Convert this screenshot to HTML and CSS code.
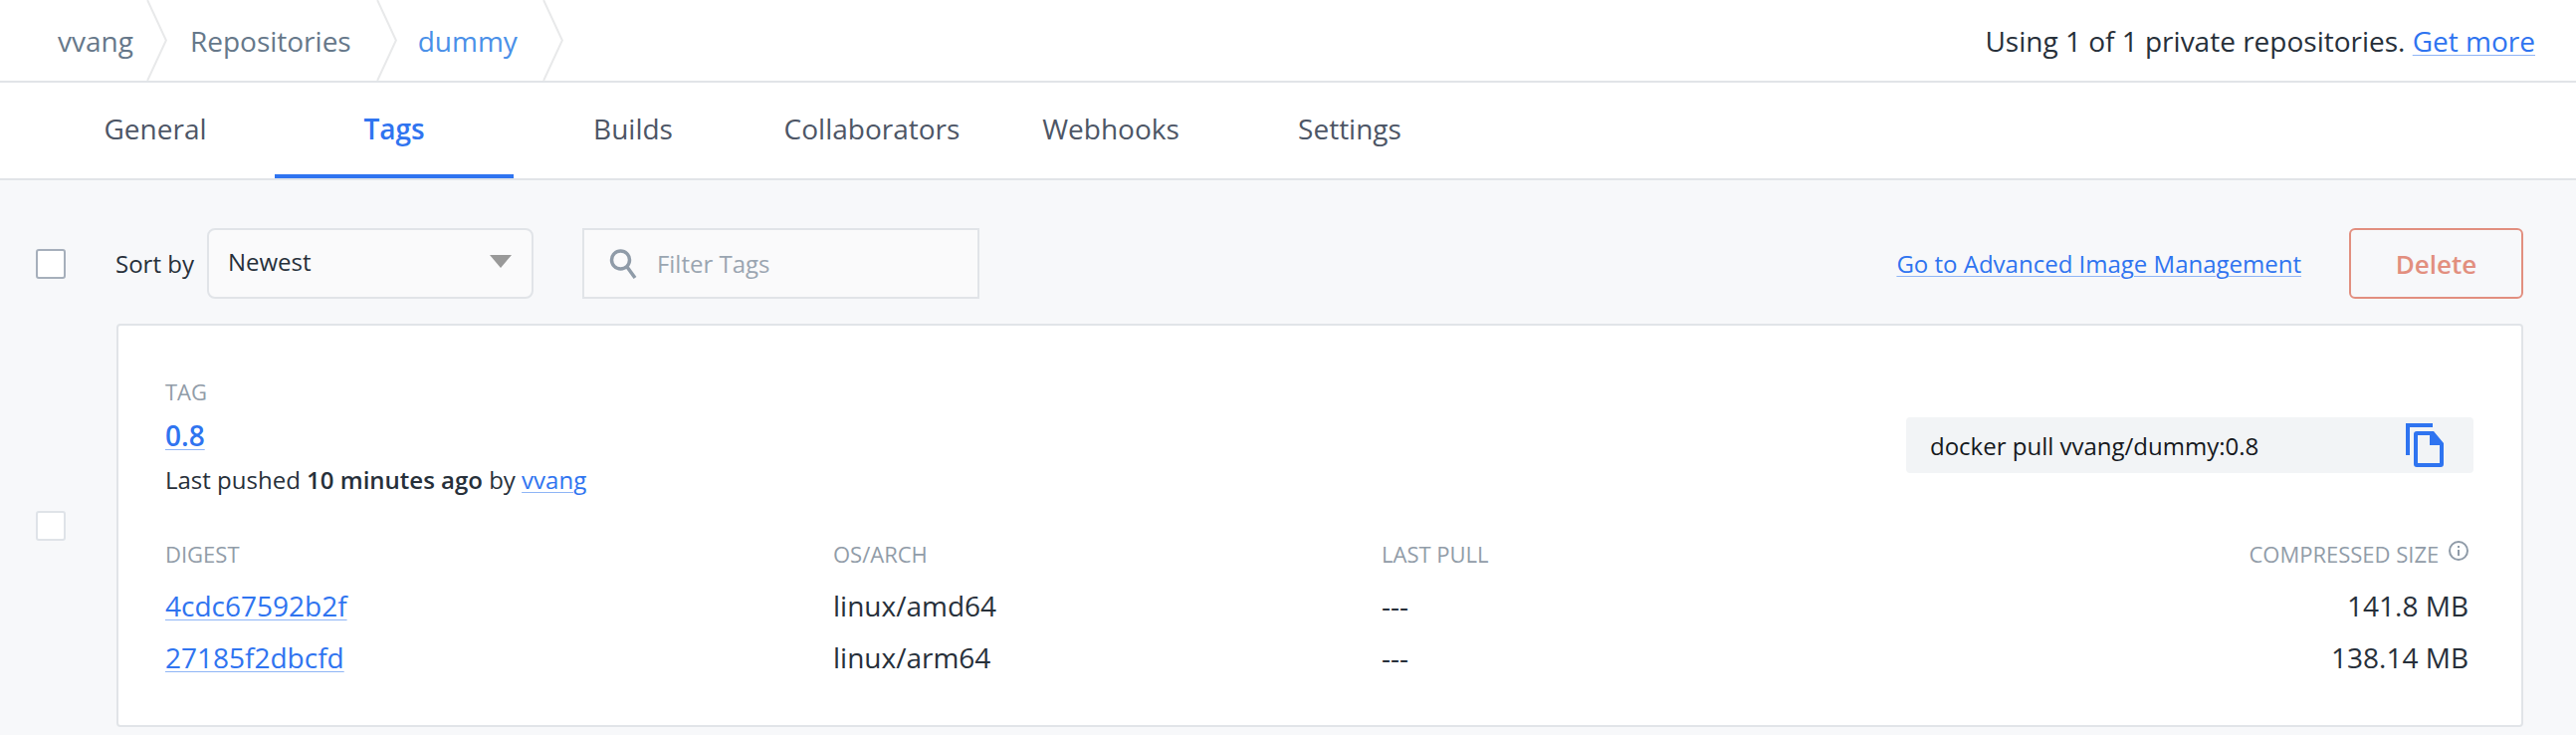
FILE: index.html
```html
<!DOCTYPE html>
<html lang="en">
<head>
<meta charset="utf-8">
<title>vvang/dummy Tags</title>
<link rel="stylesheet" href="styles.css">
</head>
<body>
<header class="crumbbar">
  <nav class="crumbs">
    <a class="crumb first">vvang</a>
    <svg class="chev" viewBox="0 0 21 82"><path d="M1 0 L20 41 L1 82" /></svg>
    <a class="crumb second">Repositories</a>
    <svg class="chev" viewBox="0 0 21 82"><path d="M1 0 L20 41 L1 82" /></svg>
    <a class="crumb current">dummy</a>
    <svg class="chev" viewBox="0 0 21 82"><path d="M1 0 L20 41 L1 82" /></svg>
  </nav>
  <p class="usage">Using 1 of 1 private repositories. <a class="link">Get more</a></p>
</header>
<nav class="tabs">
  <a class="tab">General</a>
  <a class="tab active">Tags</a>
  <a class="tab">Builds</a>
  <a class="tab">Collaborators</a>
  <a class="tab">Webhooks</a>
  <a class="tab">Settings</a>
</nav>
<main class="content">
  <div class="toolbar">
    <div class="check-col"><span class="check strong"></span></div>
    <span class="sort-label">Sort by</span>
    <div class="select"><span>Newest</span><span class="caret"></span></div>
    <div class="filter">
      <svg class="search" viewBox="0 0 28 32"><circle cx="11.5" cy="12" r="9" /><path d="M18 19 L26 30" /></svg>
      <span>Filter Tags</span>
    </div>
    <a class="link advanced">Go to Advanced Image Management</a>
    <button class="delete">Delete</button>
  </div>
  <div class="row">
    <div class="check-col"><span class="check"></span></div>
    <section class="card">
      <div class="card-head">
        <div>
          <div class="label">TAG</div>
          <a class="link tagname">0.8</a>
          <div class="pushed">Last pushed <b>10 minutes ago</b> by <a class="link">vvang</a></div>
        </div>
        <div class="pull">
          <span>docker pull vvang/dummy:0.8</span>
          <svg class="copy" viewBox="0 0 38 44"><path class="copy-fill" d="M0 0H27V4H4V32H0Z" /><path class="copy-fill" fill-rule="evenodd" d="M11 8H28L38 20V41Q38 44 35 44H11Q8 44 8 41V11Q8 8 11 8ZM12 12V40H34V22H24V12Z" /></svg>
        </div>
      </div>
      <div class="digests">
        <div class="label">DIGEST</div>
        <div class="label">OS/ARCH</div>
        <div class="label">LAST PULL</div>
        <div class="label right">COMPRESSED SIZE
          <svg class="info" viewBox="0 0 20 20"><circle cx="10" cy="10" r="9" /><path d="M10 9V15" /><path d="M10 5V7" /></svg>
        </div>
        <a class="link cell">4cdc67592b2f</a>
        <span class="cell">linux/amd64</span>
        <span class="cell">---</span>
        <span class="cell right">141.8 MB</span>
        <a class="link cell">27185f2dbcfd</a>
        <span class="cell">linux/arm64</span>
        <span class="cell">---</span>
        <span class="cell right">138.14 MB</span>
      </div>
    </section>
  </div>
</main>
</body>
</html>
```
FILE: styles.css
```css
* { box-sizing: border-box; }
html, body { height: 100%; }
body {
  margin: 0;
  background: #f7f8fa;
  color: #27303a;
  font-family: "Open Sans", "Liberation Sans", sans-serif;
  overflow: hidden;
}
p { margin: 0; }
.link { color: #2f74f0; text-decoration: underline; text-decoration-thickness: 1px; text-decoration-color: #8fb5f6; text-underline-offset: 3px; }

.crumbbar {
  display: flex;
  justify-content: space-between;
  align-items: center;
  height: 83px;
  background: #fff;
  border-bottom: 2px solid #e1e4e8;
  font-size: 28px;
}
.crumbs { display: flex; align-items: center; height: 81px; padding-left: 58px; }
.crumb { color: #66788a; }
.first { margin-right: 13px; }
.second { margin: 0 25px 0 23px; }
.current { color: #4a90e8; margin: 0 25px 0 21px; }
.chev { width: 21px; height: 81px; flex: none; }
.chev path { fill: none; stroke: #e8e9ea; stroke-width: 2; }
.usage { padding-right: 41px; color: #27303a; }

.tabs {
  display: flex;
  height: 98px;
  padding-left: 36px;
  background: #fff;
  border-bottom: 2px solid #e1e4e8;
}
.tab {
  width: 240px;
  height: 96px;
  line-height: 92px;
  text-align: center;
  font-size: 28px;
  color: #4d5666;
}
.active { color: #2f74f0; font-weight: 600; border-bottom: 4px solid #2f74f0; }

.content { padding: 48px 53px 0 36px; }
.toolbar { display: flex; align-items: center; height: 71px; font-size: 24px; }
.check-col { width: 81px; flex: none; display: flex; align-items: center; }
.check {
  display: block;
  width: 30px;
  height: 30px;
  background: #fff;
  border: 2px solid #dfe3e8;
  border-radius: 3px;
}
.check.strong { border-color: #a6afbb; }
.sort-label { margin-left: -1px; margin-right: 13px; color: #27303a; }
.select {
  display: flex;
  justify-content: space-between;
  align-items: center;
  width: 328px;
  height: 71px;
  padding: 0 20px 4px 19px;
  background: #fafafb;
  border: 2px solid #e1e4e8;
  border-radius: 8px;
  color: #27303a;
}
.caret {
  width: 0;
  height: 0;
  border-left: 11px solid transparent;
  border-right: 11px solid transparent;
  border-top: 13px solid #999;
}
.filter {
  display: flex;
  align-items: center;
  gap: 20px;
  width: 399px;
  height: 71px;
  margin-left: 49px;
  padding-left: 25px;
  background: #fafafb;
  border: 2px solid #e1e4e8;
  color: #9aa5b1;
}
.search { width: 28px; height: 32px; flex: none; }
.search circle, .search path { fill: none; stroke: #8f9ba8; stroke-width: 3.5; }
.advanced { margin-left: auto; margin-right: 48px; }
.delete {
  width: 175px;
  height: 71px;
  background: transparent;
  border: 2px solid #e28f7f;
  border-radius: 6px;
  color: #e28f7f;
  font: 600 26px "Open Sans", "Liberation Sans", sans-serif;
}

.row { display: flex; align-items: center; margin-top: 25px; }
.card {
  flex: 1;
  height: 405px;
  padding: 52px 48px 0 47px;
  background: #fff;
  border: 2px solid #e1e4e8;
  border-radius: 4px;
}
.card-head { display: flex; justify-content: space-between; align-items: flex-start; }
.label { font-size: 22px; line-height: 28px; color: #919ca8; }
.tagname { display: inline-block; margin-top: 8px; font-size: 28px; font-weight: 600; line-height: 44px; }
.pushed { font-size: 24px; line-height: 46px; color: #27303a; }
.pushed b { font-weight: 600; }
.pull {
  display: flex;
  justify-content: space-between;
  align-items: center;
  width: 570px;
  height: 56px;
  margin-top: 40px;
  padding: 0 30px 0 24px;
  background: #f2f4f6;
  border-radius: 4px;
  font-size: 24px;
  color: #16191d;
}
.copy { width: 38px; height: 44px; flex: none; }
.copy-fill { fill: #2f74f0; }
.digests {
  display: grid;
  grid-template-columns: 671px 551px 1fr auto;
  grid-auto-rows: 52px;
  align-items: center;
  margin-top: 25px;
  padding-right: 5px;
}
.digests .label { align-self: center; }
.cell { font-size: 28px; }
.right { text-align: right; justify-self: end; }
.info { width: 20px; height: 20px; margin-left: 4px; vertical-align: 2px; }
.info circle, .info path { fill: none; stroke: #8f9ba8; stroke-width: 2; }
```
